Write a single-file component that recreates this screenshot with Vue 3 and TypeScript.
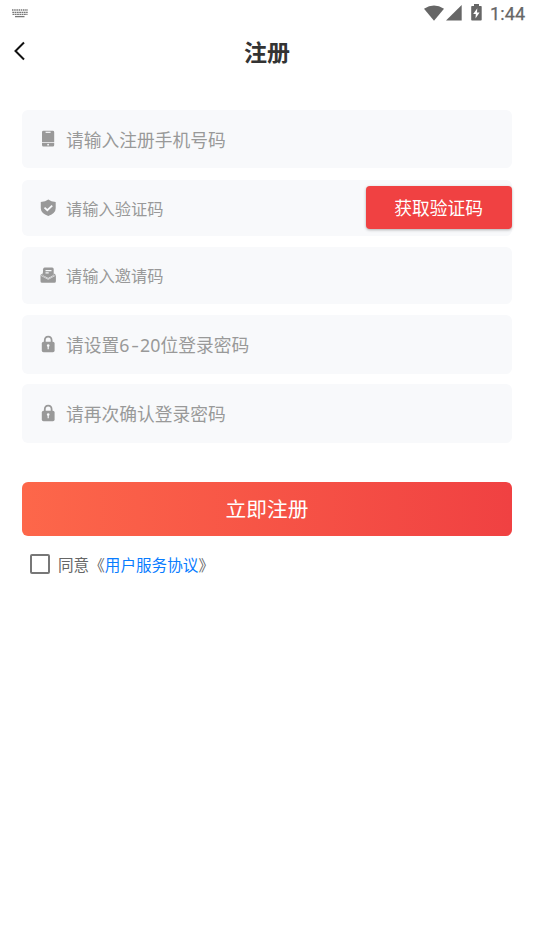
<script setup lang="ts">
import { ref } from 'vue'

interface Field {
  icon: 'phone' | 'shield' | 'mail' | 'lock'
  before: string
  range?: string[]
  after?: string
  size: string
  action?: string
}

const fields: Field[] = [
  { icon: 'phone', before: '请输入注册手机号码', size: 'large first' },
  { icon: 'shield', before: '请输入验证码', size: 'small code', action: '获取验证码' },
  { icon: 'mail', before: '请输入邀请码', size: 'small' },
  { icon: 'lock', before: '请设置', range: ['6', '-', '2', '0'], after: '位登录密码', size: 'large' },
  { icon: 'lock', before: '请再次确认登录密码', size: 'large' },
]
const agreed = ref(false)
</script>

<template>
  <main class="screen">
    <div class="status">
      <svg class="keyboard" width="16" height="9" viewBox="0 0 16 9">
        <g fill="none" stroke="#777" stroke-width="1.3">
          <path d="M0 1h16" stroke-dasharray="1.5 .7" />
          <path d="M.3 3.3h15.4M.5 5.4h15" stroke-dasharray="1.8 .5" />
          <path d="M3 7.6h9.5" />
        </g>
      </svg>
      <div class="system">
        <svg class="wifi" width="20" height="16" viewBox="0 0 20 16"><path d="M0 3.7Q10-2.6 20 3.7L10 15.7z" /></svg>
        <svg class="signal" width="16" height="16" viewBox="0 0 16 16"><path d="M15.7 0v15.5H0z" /></svg>
        <svg class="battery" width="11" height="17" viewBox="0 0 11 17">
          <path d="M3 0h5v2h2q.7 0 .7.8v13q0 .8-.8.8H1q-.8 0-.8-.8v-13Q.2 2 1 2h2z" />
          <path d="M6.3 4.3 2.2 10h2.6L4.5 14.4 8.6 8.5H6z" fill="#fff" />
        </svg>
        <span class="clock">1:44</span>
      </div>
    </div>

    <header class="nav">
      <svg class="back" width="12" height="20" viewBox="0 0 12 20"><path d="M10 1.5 1.5 10 10 18.5" /></svg>
      <h1>注册</h1>
    </header>

    <form class="form" @submit.prevent>
      <div v-for="(field, i) in fields" :key="i" class="field" :class="field.size">
        <svg class="icon" width="16" height="18" viewBox="0 0 16 18">
          <template v-if="field.icon === 'phone'">
            <path d="M3.4.8h9.4q1.4 0 1.4 1.4v10H2v-10Q2 .8 3.4.8zM2 13h12.2v2.1q0 1.5-1.4 1.5H3.4Q2 16.6 2 15.1z" />
            <path d="M5.6 2.3h5" class="line" />
            <circle cx="8.1" cy="14.7" r=".9" class="hole" />
          </template>
          <template v-else-if="field.icon === 'shield'">
            <path d="M8.3.6Q11 2.8 15.7 3v6.3q0 5-7.4 7.7Q.8 14.3.8 9.3V3Q5.5 2.8 8.3.6z" />
            <path d="m4.5 8.6 2.8 2.6 4.900-4.500" class="line check" />
          </template>
          <template v-else-if="field.icon === 'mail'">
            <path d="M4.600 1.500h7.600q1.500 0 1.500 1.500v6L8.200 12.100 2.800 9.200l.3-6Q3.200 1.500 4.600 1.500z" />
            <path d="M2.800 7.200.5 8.900v6.300q0 1.600 1.600 1.600h12.200q1.600 0 1.600-1.600V8.900l-2.200-1.700v2.400l-5.500 3.100-5.400-3.100z" />
            <path d="m.9 9.400 7.300 4 7.300-4" class="line fold" />
            <path d="M5.500 4.700h6M5.500 6.900h3.200" class="line" />
          </template>
          <template v-else>
            <path d="M4.800 7.500V5.200q0-3.500 3.400-3.500t3.400 3.500v2.300" class="shackle" />
            <rect x="1.800" y="6.800" width="12.800" height="10.400" rx="1.700" />
            <circle cx="8.200" cy="10.500" r="1.300" class="hole" />
            <path d="M8.200 10.500v3.800" class="line" />
          </template>
        </svg>
        <span class="placeholder">{{ field.before }}<span v-if="field.range" class="range"><i v-for="(c, j) in field.range" :key="j" :class="{ dash: c === '-' }">{{ c }}</i></span>{{ field.after }}</span>
        <button v-if="field.action" type="button" class="get-code">{{ field.action }}</button>
      </div>

      <button type="submit" class="submit">立即注册</button>

      <div class="agreement">
        <input v-model="agreed" type="checkbox" aria-label="同意" />
        <span>同意《<a>用户服务协议</a>》</span>
      </div>
    </form>
  </main>
</template>

<style>
body {
  background: #fff;
}
</style>

<style scoped>
.screen {
  height: 950px;
  overflow: hidden;
  font-family: "Noto Sans CJK SC", sans-serif;
  color: #333;
}
.status {
  height: 25px;
  display: flex;
  justify-content: space-between;
  padding: 0 9px 0 12px;
}
.keyboard {
  margin-top: 9px;
}
.system {
  display: flex;
  align-items: flex-start;
  fill: #666;
}
.wifi,
.signal {
  margin-top: 5px;
}
.signal {
  margin-left: 2px;
}
.battery {
  margin: 4px 8px 0 9px;
}
.clock {
  width: 35px;
  font: 400 18px/28px Roboto, sans-serif;
  letter-spacing: .1px;
  -webkit-text-stroke: .25px #666;
  color: #666;
}
.nav {
  height: 52px;
  display: grid;
  grid-template-columns: 40px 1fr 40px;
  align-items: center;
}
.back {
  margin-left: 14px;
  fill: none;
  stroke: #111;
  stroke-width: 2;
}
h1 {
  margin: 0;
  text-align: center;
  font-size: 23px;
  line-height: 34px;
  font-weight: 700;
}
.form {
  margin: 33px 22px 0;
}
.field {
  box-sizing: border-box;
  display: flex;
  align-items: center;
  margin-bottom: 10.5px;
  padding: 0 0 1px 18px;
  border-radius: 6px;
  background: #f8f9fb;
  color: #999;
}
.large {
  height: 58.5px;
  font-size: 17.75px;
}
.first {
  height: 58px;
  margin-bottom: 12px;
}
.small {
  height: 57px;
  font-size: 16.25px;
  margin-bottom: 11px;
}
.code {
  height: 56px;
}
.icon {
  flex: none;
  margin-right: 10px;
  fill: #999;
}
.icon .line,
.icon .shackle {
  fill: none;
  stroke: #f8f9fb;
  stroke-width: 1.2;
}
.icon .check {
  stroke-width: 1.8;
}
.icon .fold {
  stroke-width: .6;
}
.icon .shackle {
  stroke: #999;
  stroke-width: 1.8;
}
.icon .hole {
  fill: #f8f9fb;
}
.placeholder {
  white-space: nowrap;
}
.range {
  display: inline-flex;
  line-height: 24px;
  font-family: "Noto Sans", sans-serif;
}
.range i {
  width: 10.3px;
  text-align: center;
  font-style: normal;
}
.range .dash {
  transform: scaleX(1.35);
}
button {
  border: 0;
  padding: 0;
  font-family: inherit;
  color: #fff;
}
.get-code {
  width: 146.5px;
  height: 43px;
  margin-left: auto;
  padding-bottom: 1px;
  border-radius: 4px;
  background: #f04142;
  font-size: 17.75px;
  box-shadow: 0 1px 3px rgba(0, 0, 0, .3);
}
.submit {
  display: block;
  width: 100%;
  height: 53.5px;
  margin-top: 39.5px;
  padding-bottom: 1px;
  border-radius: 6px;
  background: linear-gradient(90deg, #fd674a, #f04142);
  font-size: 20.7px;
}
.agreement {
  display: flex;
  align-items: center;
  gap: 8px;
  margin: 16px 0 0 8px;
  font-size: 15.6px;
  line-height: 24px;
  color: #666;
}
.agreement > span {
  padding-bottom: 1px;
}
.agreement input {
  appearance: none;
  box-sizing: border-box;
  width: 20px;
  height: 20px;
  margin: 0;
  border: 2px solid #777;
  border-radius: 2px;
}
.agreement a {
  color: #087cff;
}
</style>
